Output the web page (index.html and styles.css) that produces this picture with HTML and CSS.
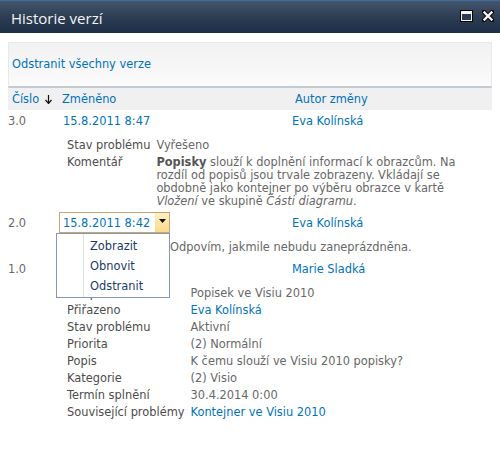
FILE: index.html
```html
<!DOCTYPE html>
<html lang="cs">
<head>
<meta charset="utf-8">
<title>Historie verzí</title>
<link rel="stylesheet" href="styles.css">
</head>
<body>
<div class="dialog">
  <div class="titlebar">
    <span class="title">Historie verzí</span>
    <div class="tb-buttons">
      <svg class="tb-icon" width="13" height="12" viewBox="0 0 13 12">
        <rect x="0.5" y="0.5" width="12" height="11" fill="#1a1a1a" stroke="#000" stroke-width="1"/>
        <rect x="1.5" y="1.5" width="10" height="9" fill="#2a3b52" stroke="#f2f2f2" stroke-width="1"/>
        <rect x="2" y="2" width="9" height="2" fill="#f2f2f2"/>
      </svg>
      <svg class="tb-icon" width="12" height="12" viewBox="0 0 12 12">
        <path d="M2 2 L10 10 M10 2 L2 10" stroke="#000" stroke-width="4.2" stroke-linecap="square"/>
        <path d="M2.5 2.5 L9.5 9.5 M9.5 2.5 L2.5 9.5" stroke="#f4f4f4" stroke-width="2.4" stroke-linecap="square"/>
      </svg>
    </div>
  </div>
  <div class="content">
    <div class="toolbar"><a class="link" href="#">Odstranit všechny verze</a></div>
    <div class="versions">
      <div class="vhead">
        <div class="hc hc-num"><a class="link" href="#">Číslo</a>
          <svg class="sort" width="7" height="9" viewBox="0 0 7 9"><path d="M3.5 0 V8" stroke="#111" stroke-width="1.2"/><path d="M0.5 5 L3.5 8.5 L6.5 5" fill="none" stroke="#111" stroke-width="1.2"/></svg>
        </div>
        <div class="hc hc-date"><a class="link" href="#">Změněno</a></div>
        <div class="hc hc-author"><a class="link" href="#">Autor změny</a></div>
      </div>

      <div class="vrow">
        <div class="vc vc-num">3.0</div>
        <div class="vc vc-date"><a class="link" href="#">15.8.2011 8:47</a></div>
        <div class="vc vc-author"><a class="link" href="#">Eva Kolínská</a></div>
      </div>
      <div class="details d-three">
        <div class="dl">Stav problému</div><div class="dv">Vyřešeno</div>
        <div class="dl">Komentář</div><div class="dv"><b>Popisky</b> slouží k doplnění informací k obrazcům. Na rozdíl od popisů jsou trvale zobrazeny. Vkládají se obdobně jako kontejner po výběru obrazce v kartě <i>Vložení</i> ve skupině <i>Části diagramu</i>.</div>
      </div>

      <div class="vrow">
        <div class="vc vc-num">2.0</div>
        <div class="vc vc-date vc-box">
          <div class="datebox">
            <a class="link" href="#">15.8.2011 8:42</a>
            <span class="dd-btn"><svg width="7" height="4" viewBox="0 0 7 4"><path d="M0 0 H7 L3.5 4 Z" fill="#111"/></svg></span>
            <div class="menu">
              <div class="mi">Zobrazit</div>
              <div class="mi">Obnovit</div>
              <div class="mi">Odstranit</div>
            </div>
          </div>
        </div>
        <div class="vc vc-author"><a class="link" href="#">Eva Kolínská</a></div>
      </div>
      <div class="details d-two">
        <div class="dl">Komentář</div><div class="dv">Odpovím, jakmile nebudu zaneprázdněna.</div>
      </div>

      <div class="vrow">
        <div class="vc vc-num">1.0</div>
        <div class="vc vc-date"><a class="link" href="#">15.8.2011 8:30</a></div>
        <div class="vc vc-author"><a class="link" href="#">Marie Sladká</a></div>
      </div>
      <div class="details d-one">
        <div class="dl">Nadpis</div><div class="dv">Popisek ve Visiu 2010</div>
        <div class="dl">Přiřazeno</div><div class="dv"><a class="link" href="#">Eva Kolínská</a></div>
        <div class="dl">Stav problému</div><div class="dv">Aktivní</div>
        <div class="dl">Priorita</div><div class="dv">(2) Normální</div>
        <div class="dl">Popis</div><div class="dv">K čemu slouží ve Visiu 2010 popisky?</div>
        <div class="dl">Kategorie</div><div class="dv">(2) Visio</div>
        <div class="dl">Termín splnění</div><div class="dv">30.4.2014 0:00</div>
        <div class="dl">Související problémy</div><div class="dv"><a class="link" href="#">Kontejner ve Visiu 2010</a></div>
      </div>
    </div>
  </div>
</div>
</body>
</html>
```

FILE: styles.css
```css
html, body {
  margin: 0;
  padding: 0;
  background: #fff;
}
body {
  font-family: "DejaVu Sans", Verdana, sans-serif;
  font-size: 11.4px;
  line-height: 13px;
  color: #676767;
}
.dialog {
  width: 500px;
  height: 449px;
  overflow: hidden;
}
.titlebar {
  height: 33px;
  box-sizing: border-box;
  border-top: 1px solid #3a6ea5;
  background: linear-gradient(#45556a, #2a3b52 55%, #1d2f47);
  display: flex;
  align-items: center;
  justify-content: space-between;
  padding: 0 6px 0 11px;
}
.title {
  font-family: "Open Sans", "Liberation Sans", sans-serif;
  font-size: 15px;
  line-height: 20px;
  color: #f4f4f4;
  margin-top: 2px;
}
.tb-buttons {
  display: flex;
  gap: 9px;
  align-items: center;
  margin-top: -2px;
}
.tb-icon { display: block; }
.content {
  padding: 9px 8px 0;
}
.link {
  color: #0072bc;
  text-decoration: none;
}
.toolbar {
  height: 46px;
  box-sizing: border-box;
  border: 1px solid #e9e9e9;
  border-bottom: 2px solid #c3cad2;
  background: linear-gradient(#f1f1f1, #fbfbfb);
  display: flex;
  align-items: center;
  padding: 0 3px;
}
.vhead, .vrow {
  display: grid;
  grid-template-columns: 51px 229px 1fr;
}
.vhead {
  background: #f0f0f0;
  height: 22px;
  align-items: center;
}
.hc-num { padding-left: 4px; display: flex; align-items: center; gap: 6px; }
.hc-date { padding-left: 3px; }
.hc-author { padding-left: 7px; }
.sort { display: block; }
.vrow {
  height: 21px;
  align-items: center;
}
.vc { padding-top: 2px; }
.vc-num { padding-left: 0; }
.vc-date { padding-left: 4px; }
.vc-author { padding-left: 4px; }
.vc-box { padding-top: 0; }
.datebox {
  position: relative;
  margin-left: -4px;
  width: 111px;
  height: 21px;
  box-sizing: border-box;
  border: 1px solid #c6a66a;
  display: flex;
  align-items: center;
  justify-content: space-between;
  padding: 1px 0 0 3px;
}
.dd-btn {
  width: 14px;
  height: 19px;
  margin-top: -1px;
  background: linear-gradient(#fff0c2, #fbd989);
  display: flex;
  align-items: center;
  justify-content: center;
  padding-bottom: 3px;
  box-sizing: border-box;
}
.dd-btn svg { display: block; }
.menu {
  position: absolute;
  left: -4px;
  top: 20px;
  width: 114px;
  height: 65px;
  box-sizing: border-box;
  border: 1px solid #8799b2;
  background: #fff linear-gradient(90deg, transparent 26px, #e2e2e2 26px, #e2e2e2 27px, transparent 27px);
  padding-top: 2px;
  z-index: 5;
}
.mi {
  height: 20px;
  line-height: 20px;
  padding-left: 33px;
  color: #1b3a6b;
}
.details {
  display: grid;
  grid-template-columns: auto 1fr;
  column-gap: 6px;
  padding: 5px 22px 3px 59px;
}
.d-two { grid-template-columns: 97px 1fr; }
.dl, .dv {
  padding: 3px 0 1px;
}
.dl { color: #4c4c4c; white-space: nowrap; }
.dv b { color: #555; }
```
